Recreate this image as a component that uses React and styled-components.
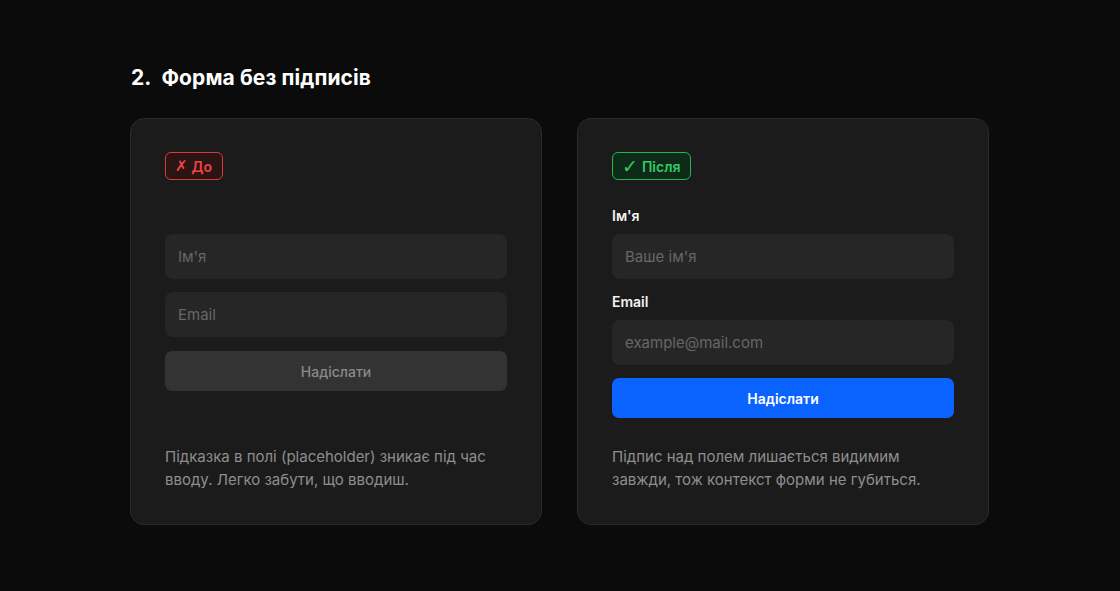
import React from "react";
import styled, { createGlobalStyle } from "styled-components";

const Global = createGlobalStyle`
  html, body {
    margin: 0;
    background: #0b0b0b;
    font-family: Inter, "Noto Sans", sans-serif;
    -webkit-font-smoothing: antialiased;
  }
  * { box-sizing: border-box; }
`;

const Page = styled.div`
  width: 860px;
  margin: 0 auto;
  padding-top: 63px;
  padding-bottom: 66px;
`;

const Heading = styled.h2`
  margin: 0 0 26px 1px;
  font-size: 21px;
  line-height: 29px;
  font-weight: 700;
  color: #ffffff;
  letter-spacing: 0.1px;
`;

const Num = styled.span`
  margin-right: 10px;
`;

const Grid = styled.div`
  display: grid;
  grid-template-columns: 412px 412px;
  gap: 35px;
`;

const Card = styled.div`
  display: flex;
  flex-direction: column;
  background: #1b1b1b;
  border: 1px solid #2b2b2b;
  border-radius: 14px;
  padding: 33px 34px 33px 34px;
`;

const Badge = styled.span`
  align-self: flex-start;
  display: inline-flex;
  align-items: center;
  gap: 4px;
  height: 28px;
  padding: 0 10px 0 9px;
  border-radius: 6px;
  font-size: 14px;
  font-weight: 600;
  color: ${(p) => (p.good ? "#2ecc63" : "#ef4444")};
  border: 1px solid ${(p) => (p.good ? "#22b455" : "#dc3b3b")};
  background: ${(p) => (p.good ? "#0f2a18" : "#2a1414")};
`;

const Mark = styled.span`
  font-family: "DejaVu Sans", sans-serif;
  font-size: ${(p) => p.size}px;
  line-height: 1;
`;

const Form = styled.div`
  display: flex;
  flex-direction: column;
  margin-top: ${(p) => p.top}px;
`;

const Label = styled.div`
  font-size: 14px;
  line-height: 20px;
  font-weight: 600;
  color: #f2f2f2;
  margin-bottom: 8px;
`;

const Input = styled.div`
  height: 45px;
  border-radius: 8px;
  background: #262626;
  padding: 0 13px;
  display: flex;
  align-items: center;
  font-size: 15px;
  color: #666666;
  margin-bottom: 13px;
`;

const Button = styled.div`
  height: 40px;
  border-radius: 7px;
  display: flex;
  align-items: center;
  justify-content: center;
  font-size: 14px;
  font-weight: ${(p) => (p.primary ? 600 : 500)};
  color: ${(p) => (p.primary ? "#ffffff" : "#8a8a8a")};
  background: ${(p) => (p.primary ? "#0a63ff" : "#333333")};
  margin-top: ${(p) => (p.primary ? 0 : 1)}px;
`;

const Caption = styled.p`
  margin: auto 0 0 0;
  padding-top: 27px;
  font-size: 15px;
  line-height: 23px;
  color: #8e8e8e;
`;

export default function App() {
  return (
    <>
      <Global />
      <Page>
        <Heading>
          <Num>2.</Num>Форма без підписів
        </Heading>
        <Grid>
          <Card>
            <Badge>
              <Mark size={15}>✗</Mark>До
            </Badge>
            <Form top={54}>
              <Input>Ім'я</Input>
              <Input>Email</Input>
              <Button>Надіслати</Button>
            </Form>
            <Caption>
              Підказка в полі (placeholder) зникає під час вводу. Легко забути,
              що вводиш.
            </Caption>
          </Card>
          <Card>
            <Badge good>
              <Mark size={19}>✓</Mark>Після
            </Badge>
            <Form top={26}>
              <Label>Ім'я</Label>
              <Input>Ваше ім'я</Input>
              <Label>Email</Label>
              <Input>example@mail.com</Input>
              <Button primary>Надіслати</Button>
            </Form>
            <Caption>
              Підпис над полем лишається видимим завжди, тож контекст форми не
              губиться.
            </Caption>
          </Card>
        </Grid>
      </Page>
    </>
  );
}
